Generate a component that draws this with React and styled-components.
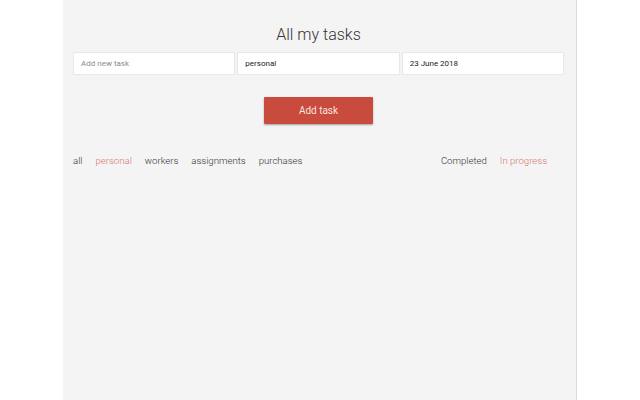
import React from 'react';
import styled, { createGlobalStyle } from 'styled-components';

const GlobalStyle = createGlobalStyle`
  html, body {
    margin: 0;
    padding: 0;
    background: #ffffff;
    font-family: Roboto, "Liberation Sans", sans-serif;
  }
`;

const Page = styled.div`
  width: 640px;
  height: 400px;
  display: flex;
  justify-content: flex-start;
  padding-left: 63px;
  box-sizing: border-box;
`;

const Panel = styled.div`
  width: 514px;
  height: 400px;
  box-sizing: border-box;
  background: #f4f4f4;
  border-right: 1px solid #dcdcdc;
  padding: 24px 12px 0 10px;
  display: flex;
  flex-direction: column;
`;

const Title = styled.h1`
  margin: 0;
  text-align: center;
  font-size: 16px;
  font-weight: 300;
  color: #333;
  line-height: 22px;
`;

const InputRow = styled.div`
  display: grid;
  grid-template-columns: repeat(3, 1fr);
  gap: 2px;
  margin-top: 6px;
`;

const Field = styled.input`
  height: 23px;
  box-sizing: border-box;
  border: 1px solid #e8e8e8;
  background: #fff;
  padding: 0 7px;
  font-family: Roboto, "Liberation Sans", sans-serif;
  font-size: 8px;
  color: #222;
  outline: none;
  &::placeholder {
    color: #8a8a8a;
  }
`;

const ButtonRow = styled.div`
  display: flex;
  justify-content: center;
  margin-top: 22px;
`;

const AddButton = styled.button`
  width: 109px;
  height: 27px;
  border: none;
  border-radius: 1px;
  background: #c84b3d;
  color: #fbe3df;
  font-family: Roboto, "Liberation Sans", sans-serif;
  font-size: 10px;
  box-shadow: 0 1px 2px rgba(0, 0, 0, 0.35);
`;

const FilterRow = styled.div`
  display: flex;
  justify-content: space-between;
  align-items: center;
  margin-top: 31px;
  padding: 0 17px 0 0;
`;

const Group = styled.div`
  display: flex;
  gap: 13px;
`;

const Filter = styled.span`
  font-size: 9.6px;
  font-weight: 300;
  color: ${(p) => (p.active ? '#d9766d' : '#333')};
`;

const categories = ['all', 'personal', 'workers', 'assignments', 'purchases'];

export default function App() {
  return (
    <>
      <GlobalStyle />
      <Page>
        <Panel>
          <Title>All my tasks</Title>
          <InputRow>
            <Field placeholder="Add new task" />
            <Field defaultValue="personal" />
            <Field defaultValue="23 June 2018" />
          </InputRow>
          <ButtonRow>
            <AddButton>Add task</AddButton>
          </ButtonRow>
          <FilterRow>
            <Group>
              {categories.map((c) => (
                <Filter key={c} active={c === 'personal'}>{c}</Filter>
              ))}
            </Group>
            <Group>
              <Filter>Completed</Filter>
              <Filter active>In progress</Filter>
            </Group>
          </FilterRow>
        </Panel>
      </Page>
    </>
  );
}
